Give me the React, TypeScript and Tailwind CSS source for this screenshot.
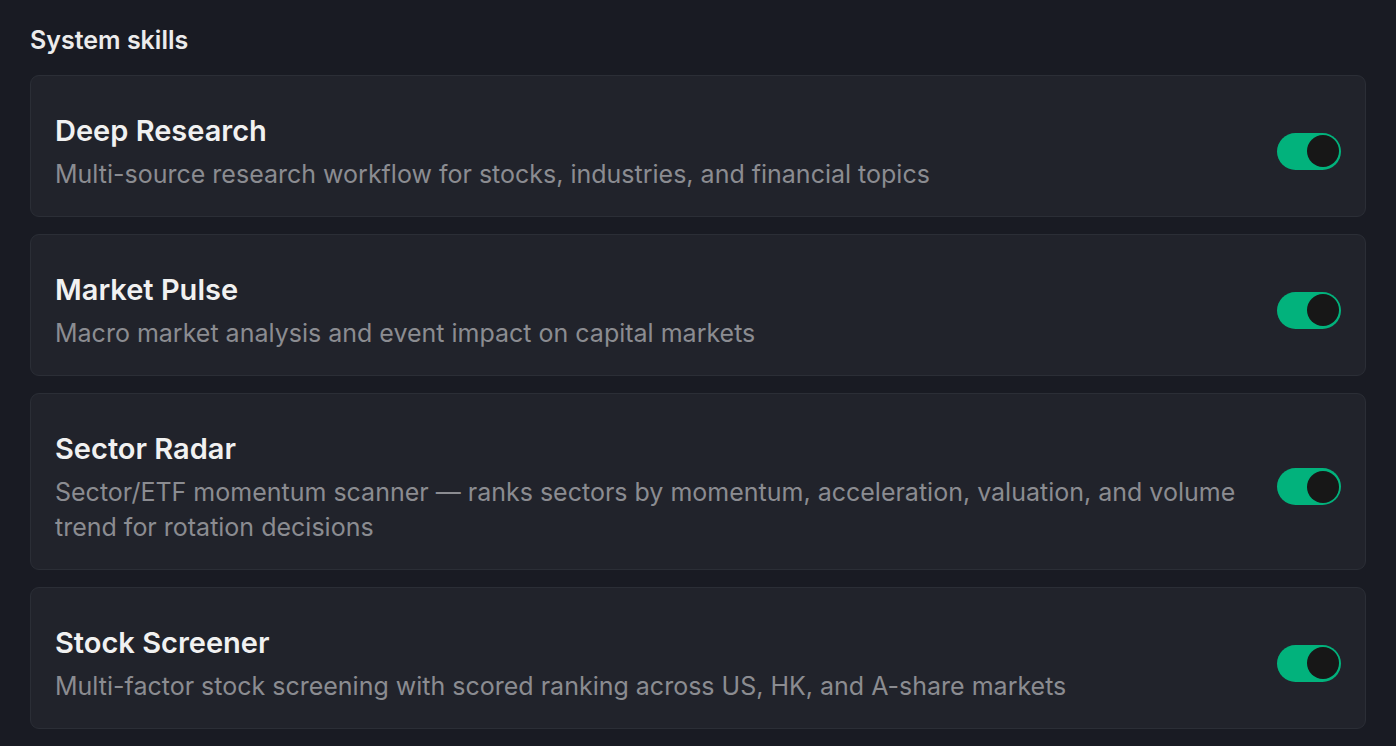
import React from "react";

const skills = [
  {
    name: "Deep Research",
    desc: "Multi-source research workflow for stocks, industries, and financial topics",
  },
  {
    name: "Market Pulse",
    desc: "Macro market analysis and event impact on capital markets",
  },
  {
    name: "Sector Radar",
    desc: "Sector/ETF momentum scanner — ranks sectors by momentum, acceleration, valuation, and volume trend for rotation decisions",
  },
  {
    name: "Stock Screener",
    desc: "Multi-factor stock screening with scored ranking across US, HK, and A-share markets",
  },
];

function Toggle() {
  return (
    <div className="mb-[3px] flex h-[37px] w-[64px] shrink-0 items-center justify-end rounded-full bg-[#02b27c] pr-[2px]">
      <div className="h-[32px] w-[32px] rounded-full bg-[#171717]" />
    </div>
  );
}

export default function App() {
  return (
    <div
      className="min-h-[746px] w-full bg-[#191b23] px-[30px] pt-[25px]"
      style={{ fontFamily: "Inter, 'Noto Sans', sans-serif" }}
    >
      <h2 className="mb-[20px] text-[25px] font-semibold leading-[30px] text-[#ececec]">
        System skills
      </h2>
      <div className="flex flex-col gap-[17px]">
        {skills.map((s) => (
          <div
            key={s.name}
            className="flex items-center gap-[24px] rounded-[9px] border border-[#2b2e36] bg-[#21232b] pb-[24px] pl-[24px] pr-[24px] pt-[37px]"
          >
            <div className="flex min-w-0 flex-1 flex-col">
              <div className="text-[29px] font-semibold leading-[36px] text-[#f1f1f1]">
                {s.name}
              </div>
              <div className="mt-[8px] text-[25px] leading-[35px] text-[#8b8c91]">
                {s.desc}
              </div>
            </div>
            <Toggle />
          </div>
        ))}
      </div>
    </div>
  );
}
